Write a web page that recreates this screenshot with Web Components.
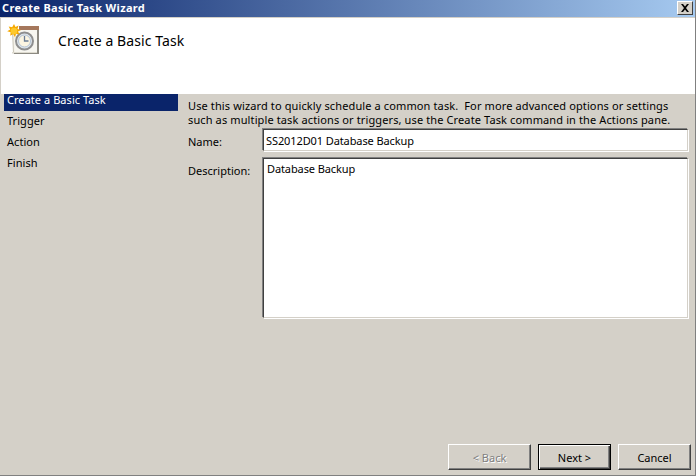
<!DOCTYPE html>
<html>
<head>
<meta charset="utf-8">
<title>Create Basic Task Wizard</title>
<style>
    html, body { margin: 0; padding: 0; background: #d4d0c8; }
    body { font: 11px "Noto Sans", Tahoma, sans-serif; }
</style>
</head>
<body>
<wizard-window>
    <title-bar slot="title">Create Basic Task Wizard</title-bar>
    <wizard-header slot="header">Create a Basic Task</wizard-header>
    <wizard-steps slot="steps">
        <wizard-step selected>Create a Basic Task</wizard-step>
        <wizard-step>Trigger</wizard-step>
        <wizard-step>Action</wizard-step>
        <wizard-step>Finish</wizard-step>
    </wizard-steps>
    <task-form slot="form"></task-form>
    <classic-button slot="buttons" disabled>&lt; Back</classic-button>
    <classic-button slot="buttons" default>Next &gt;</classic-button>
    <classic-button slot="buttons">Cancel</classic-button>
</wizard-window>

<script>
const TEXT_FONT = `font: 11px "Noto Sans", Tahoma, sans-serif;`;

class WizardWindow extends HTMLElement {
    constructor() {
        super();
        this.attachShadow({ mode: 'open' });
        this.shadowRoot.innerHTML = `
            <style>
                :host {
                    display: flex;
                    flex-direction: column;
                    box-sizing: border-box;
                    width: 696px;
                    height: 476px;
                    background: #d4d0c8;
                    border-right: 1px solid #808080;
                    border-bottom: 1px solid #808080;
                    overflow: hidden;
                }
                .body {
                    flex: 1;
                    display: flex;
                    min-height: 0;
                    padding-left: 4px;
                }
                .left { width: 174px; flex: none; }
                .right { flex: 1; padding: 5px 6px 0 10px; }
                .buttons {
                    display: flex;
                    justify-content: flex-end;
                    gap: 7px;
                    padding: 0 4px 5px 0;
                }
            </style>
            <slot name="title"></slot>
            <slot name="header"></slot>
            <div class="body">
                <div class="left"><slot name="steps"></slot></div>
                <div class="right"><slot name="form"></slot></div>
            </div>
            <div class="buttons"><slot name="buttons"></slot></div>
        `;
    }
}

class TitleBar extends HTMLElement {
    constructor() {
        super();
        this.attachShadow({ mode: 'open' });
        this.shadowRoot.innerHTML = `
            <style>
                :host {
                    display: flex;
                    align-items: flex-start;
                    justify-content: space-between;
                    box-sizing: border-box;
                    height: 17px;
                    padding: 0 2px 0 2px;
                    background: linear-gradient(to right, #0a246a, #a6caf0);
                    color: #fff;
                    font: bold 11px "Noto Sans", Tahoma, sans-serif;
                    letter-spacing: 0.33px;
                }
                .close {
                    box-sizing: border-box;
                    width: 16px;
                    height: 14px;
                    margin-top: 1px;
                    background: #d4d0c8;
                    border: 1px solid;
                    border-color: #fff #404040 #404040 #fff;
                    display: flex;
                    align-items: center;
                    justify-content: center;
                }
            </style>
            <span><slot></slot></span>
            <span class="close">
                <svg width="10" height="8" viewBox="0 0 10 8"><path d="M1 0h2l2 2.500L7 0h2L6 4l3 4H7L5 5.500 3 8H1l3-4z" fill="#000"/></svg>
            </span>
        `;
    }
}

class WizardHeader extends HTMLElement {
    constructor() {
        super();
        this.attachShadow({ mode: 'open' });
        this.shadowRoot.innerHTML = `
            <style>
                :host {
                    display: flex;
                    box-sizing: border-box;
                    height: 76px;
                    margin: 1px 0 0 1px;
                    padding: 6px 0 0 4px;
                    background: #fff;
                    color: #000;
                }
                svg { flex: none; }
                .title {
                    margin: 7px 0 0 19px;
                    font: 14px "Noto Sans", Tahoma, sans-serif;
                    letter-spacing: 0.1px;
                }
            </style>
            <svg width="34" height="34" viewBox="0 0 34 34">
                <path d="M7.500 6.500h25v20l-24 2.500z" fill="#f4f2ea" stroke="#c9c5b8"/>
                <path d="M10 6h22v22H10z" fill="#f7f6f0"/>
                <path d="M7 28h26v1.500H7z" fill="#dedbd0"/>
                <path d="M32 6h2v24H9v-1h23z" fill="#8c8a82"/>
                <path d="M14 2h20v4H14z" fill="#a5775c"/>
                <circle cx="19.500" cy="17" r="8.500" fill="#dfe7ee" stroke="#8e8e8e" stroke-width="2"/>
                <circle cx="19.500" cy="17" r="6" fill="#fbf5e2" stroke="#b4c3d3"/>
                <path d="M19.500 12v5h4" fill="none" stroke="#6a7c95" stroke-width="1.300"/>
                <path d="M9 0l1.500 3 3-1.500-1 3.500 3.500 1-3 1.500 1.500 3-3.500-.8-1 3.500-1.800-3.200-3 1.700.5-3.500-3.500-1 3-1.700-1.500-3 3.500.7z" fill="#f6a800"/>
                <circle cx="9" cy="7" r="3.300" fill="#fdc92c"/>
            </svg>
            <div class="title"><slot></slot></div>
        `;
    }
}

class WizardSteps extends HTMLElement {
    constructor() {
        super();
        this.attachShadow({ mode: 'open' });
        this.shadowRoot.innerHTML = `
            <style>
                :host { display: flex; flex-direction: column; gap: 4px; }
            </style>
            <slot></slot>
        `;
    }
}

class WizardStep extends HTMLElement {
    constructor() {
        super();
        this.attachShadow({ mode: 'open' });
        this.shadowRoot.innerHTML = `
            <style>
                :host {
                    display: block;
                    box-sizing: border-box;
                    height: 17px;
                    padding-left: 3px;
                    color: #000;
                    ${TEXT_FONT}
                    line-height: 11px;
                    letter-spacing: 0.05px;
                }
                :host([selected]) { background: #0a246a; color: #fff; }
            </style>
            <slot></slot>
        `;
    }
}

class TaskForm extends HTMLElement {
    constructor() {
        super();
        this.attachShadow({ mode: 'open' });
        this.shadowRoot.innerHTML = `
            <style>
                :host {
                    display: block;
                    color: #000;
                    ${TEXT_FONT}
                }
                p { margin: 0 0 1px; line-height: 14px; white-space: pre; letter-spacing: 0.12px; }
                .row { display: flex; margin-bottom: 6px; }
                label { width: 74px; flex: none; line-height: 15px; padding-top: 6px; }
                .field {
                    flex: 1;
                    box-sizing: border-box;
                    height: 22px;
                    padding: 3px 0 0 2px;
                    background: #fff;
                    border: 1px solid;
                    border-color: #404040 #d4d0c8 #d4d0c8 #404040;
                    box-shadow: 1px 1px 0 #fff, -1px -1px 0 #808080;
                    margin: 1px 1px 0 1px;
                    font: inherit;
                    line-height: 15px;
                    letter-spacing: -0.1px;
                    color: inherit;
                }
                .desc .field { height: 160px; padding: 2px 0 0 3px; }
            </style>
            <p>Use this wizard to quickly schedule a common task.  For more advanced options or settings
such as multiple task actions or triggers, use the Create Task command in the Actions pane.</p>
            <div class="row"><label>Name:</label><div class="field">SS2012D01 Database Backup</div></div>
            <div class="row desc"><label>Description:</label><div class="field">Database Backup</div></div>
        `;
    }
}

class ClassicButton extends HTMLElement {
    constructor() {
        super();
        this.attachShadow({ mode: 'open' });
        this.shadowRoot.innerHTML = `
            <style>
                :host {
                    display: flex;
                    align-items: center;
                    justify-content: center;
                    box-sizing: border-box;
                    width: 73px;
                    height: 26px;
                    background: #d4d0c8;
                    color: #000;
                    border: 1px solid;
                    border-color: #fff #404040 #404040 #fff;
                    box-shadow: inset -1px -1px 0 #808080;
                    ${TEXT_FONT}
                }
                :host([disabled]) {
                    width: 83px;
                    color: #808080;
                    text-shadow: 1px 1px 0 #fff;
                }
                :host([default]) {
                    border-color: #000;
                    box-shadow: inset 1px 1px 0 #fff, inset -1px -1px 0 #404040, inset -2px -2px 0 #808080;
                }
            </style>
            <slot></slot>
        `;
    }
}

customElements.define("wizard-window", WizardWindow);
customElements.define("title-bar", TitleBar);
customElements.define("wizard-header", WizardHeader);
customElements.define("wizard-steps", WizardSteps);
customElements.define("wizard-step", WizardStep);
customElements.define("task-form", TaskForm);
customElements.define("classic-button", ClassicButton);
</script>
</body>
</html>
